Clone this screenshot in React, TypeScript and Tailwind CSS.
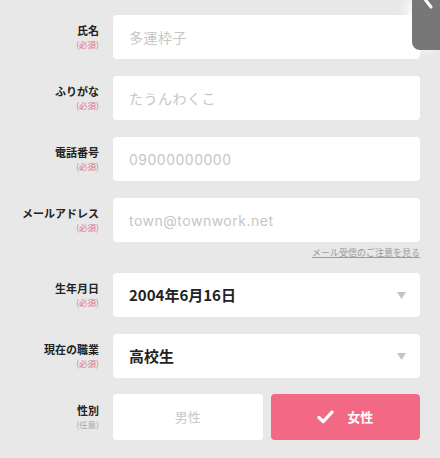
const font = { fontFamily: '"Noto Sans CJK JP", "Noto Sans", sans-serif' };

type Field = {
  label: string;
  required: boolean;
  value: string;
  placeholder?: boolean;
  select?: boolean;
  latin?: boolean;
};

const fields: Field[] = [
  { label: "氏名", required: true, value: "多運枠子", placeholder: true },
  { label: "ふりがな", required: true, value: "たうんわくこ", placeholder: true },
  { label: "電話番号", required: true, value: "09000000000", placeholder: true, latin: true },
  { label: "メールアドレス", required: true, value: "town@townwork.net", placeholder: true, latin: true },
  { label: "生年月日", required: true, value: "2004年6月16日", select: true },
  { label: "現在の職業", required: true, value: "高校生", select: true },
];

function Label({ text, required }: { text: string; required: boolean }) {
  return (
    <div className="w-[113px] shrink-0 pr-[14px] flex flex-col items-end leading-none">
      <span className="text-[11px] font-bold text-[#222]">{text}</span>
      <span className={`text-[8.5px] mt-[4px] ${required ? "text-[#e0728a]" : "text-[#aaa]"}`}>
        {required ? "(必須)" : "(任意)"}
      </span>
    </div>
  );
}

export default function App() {
  return (
    <div className="relative w-[440px] h-[458px] bg-[#e8e8e8] overflow-hidden" style={font}>
      <div className="flex flex-col pt-[15px] pr-[20px]">
        {fields.map((f, i) => (
          <div key={f.label}>
            <div className={`flex items-center ${i > 0 ? (i === 4 ? "mt-[16px]" : "mt-[17px]") : ""}`}>
              <Label text={f.label} required={f.required} />
              <div className="flex-1 h-[44px] bg-white rounded-[4px] flex items-center pl-[16px] pr-[12px]">
                <span
                  className={
                    f.placeholder
                      ? "text-[14px] text-[#c6c6c6] tracking-[0.5px]"
                      : "text-[15px] font-bold text-[#222]"
                  }
                  style={f.latin ? { fontFamily: '"Inter", "Noto Sans", sans-serif' } : undefined}
                >
                  {f.value}
                </span>
                {f.select && (
                  <svg className="ml-auto mr-[2px]" width="9" height="7" viewBox="0 0 9 7">
                    <path d="M0 0h9L4.5 7z" fill="#c4c4c4" />
                  </svg>
                )}
              </div>
            </div>
            {i === 3 && (
              <div className="flex justify-end mt-[6px]">
                <span className="text-[9px] text-[#9a9a9a] underline leading-none">メール受信のご注意を見る</span>
              </div>
            )}
          </div>
        ))}
        <div className="flex items-center mt-[16px]">
          <Label text="性別" required={false} />
          <div className="flex-1 flex gap-[8px]">
            <div className="flex-1 h-[46px] bg-white rounded-[4px] flex items-center justify-center text-[13px] text-[#c8c8c8]">
              男性
            </div>
            <div className="flex-1 h-[46px] bg-[#f26986] rounded-[4px] flex items-center justify-center gap-[13px] text-[13px] font-bold text-white">
              <svg width="17" height="14" viewBox="0 0 17 14">
                <path d="M2 7.5l4.2 4.2L15 2.2" fill="none" stroke="#fff" strokeWidth="3.2" strokeLinecap="round" strokeLinejoin="round" />
              </svg>
              <span>女性</span>
            </div>
          </div>
        </div>
      </div>
      <div className="absolute right-0 top-0 w-[28px] h-[50px] bg-[#777] rounded-bl-[8px] shadow-[-6px_0_10px_rgba(255,255,255,0.8)]">
        <svg className="absolute left-0 top-0" width="28" height="20" viewBox="0 0 28 20">
          <path d="M12 -2l7 9" stroke="#fff" strokeWidth="3" strokeLinecap="round" />
        </svg>
      </div>
    </div>
  );
}
